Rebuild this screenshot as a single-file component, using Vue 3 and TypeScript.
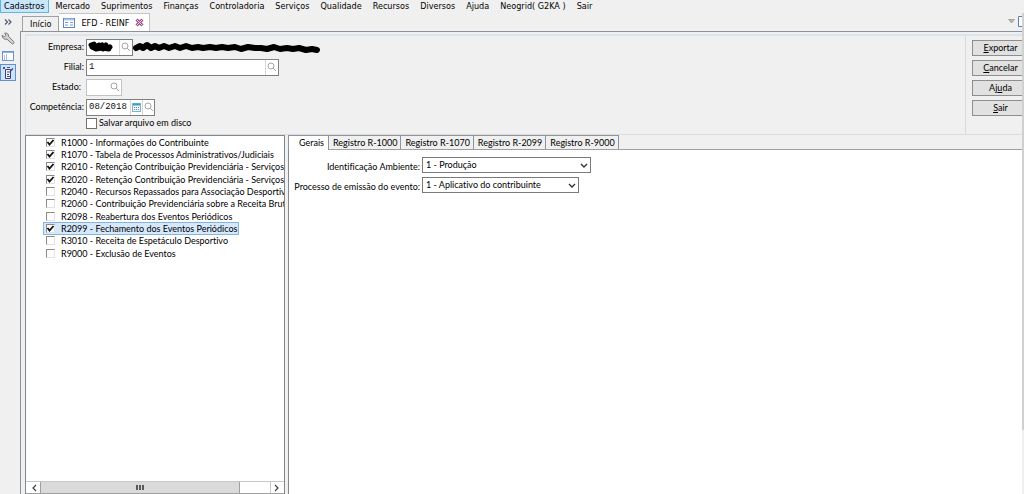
<script setup lang="ts">
import { ref } from 'vue'

const menus = ['Cadastros', 'Mercado', 'Suprimentos', 'Finanças', 'Controladoria', 'Serviços', 'Qualidade', 'Recursos', 'Diversos', 'Ajuda', 'Neogrid( G2KA )', 'Sair']

interface EventItem { label: string; checked: boolean; selected?: boolean }
const events = ref<EventItem[]>([
  { label: 'R1000 - Informações do Contribuinte', checked: true },
  { label: 'R1070 - Tabela de Processos Administrativos/Judiciais', checked: true },
  { label: 'R2010 - Retenção Contribuição Previdenciária - Serviços Tomados', checked: true },
  { label: 'R2020 - Retenção Contribuição Previdenciária - Serviços Prestados', checked: true },
  { label: 'R2040 - Recursos Repassados para Associação Desportiva', checked: false },
  { label: 'R2060 - Contribuição Previdenciária sobre a Receita Bruta', checked: false },
  { label: 'R2098 - Reabertura dos Eventos Periódicos', checked: false },
  { label: 'R2099 - Fechamento dos Eventos Periódicos', checked: true, selected: true },
  { label: 'R3010 - Receita de Espetáculo Desportivo', checked: false },
  { label: 'R9000 - Exclusão de Eventos', checked: false },
])

const tabs = ['Gerais', 'Registro R-1000', 'Registro R-1070', 'Registro R-2099', 'Registro R-9000']
const activeTab = ref('Gerais')

const actions = [
  { pre: '', key: 'E', post: 'xportar' },
  { pre: '', key: 'C', post: 'ancelar' },
  { pre: 'Aj', key: 'u', post: 'da' },
  { pre: '', key: 'S', post: 'air' },
]

const filial = ref('1')
const estado = ref('')
const competencia = ref('08/2018')
const salvar = ref(false)
const ambiente = ref('1 - Produção')
const processo = ref('1 - Aplicativo do contribuinte')
</script>

<template>
  <div class="app">
    <nav class="menubar">
      <button v-for="(m, i) in menus" :key="m" type="button" class="menu" :class="{ current: i === 0 }">{{ m }}</button>
    </nav>

    <div class="body">
      <aside class="rail">
        <button type="button" class="rail-btn" aria-label="Expandir">
          <svg width="8" height="6" viewBox="0 0 8 6"><path d="M1 .5l2.500 2.500L1 5.500M4.500 .5L7 3 4.500 5.500" fill="none" stroke="#45526e" stroke-width="1.100" /></svg>
        </button>
        <button type="button" class="rail-btn" aria-label="Ferramentas">
          <svg width="14" height="14" viewBox="0 0 14 14"><path d="M1.200 3.200l2.300 1.600 1.500-1.500L3.600 1.200c2.300-.6 4.300.9 4 3.300l5 5c1.200 1.300-.7 3.200-2 2L6 7.200C3.500 7.800 1 6 1.200 3.200z" fill="#d4d4d4" stroke="#777" stroke-width="1" /></svg>
        </button>
        <button type="button" class="rail-btn" aria-label="Formulários">
          <svg width="12" height="10" viewBox="0 0 12 10"><rect x=".5" y=".5" width="11" height="9" fill="#fff" stroke="#6f93cf" /><path d="M1 1.500h10" stroke="#8db1e6" /><path d="M2.500 4v5M4.500 3v6" stroke="#a3bfe8" /></svg>
        </button>
        <button type="button" class="rail-btn on" aria-label="EFD">
          <svg width="12" height="13" viewBox="0 0 12 13"><path d="M1 1h2v2H1zM5 1h3v1H5z" fill="#5a4a8a" /><path d="M3.500 3.500h5v9h-5z" fill="#f5f7ff" stroke="#40407c" /><path d="M5 6h3M5 8.500h2M5 10.500h3M8.500 5L11 2.500" fill="none" stroke="#40407c" stroke-width="1.200" /></svg>
        </button>
      </aside>

      <section class="workspace">
        <div class="doc-tabs">
          <button type="button" class="doc-tab">Início</button>
          <button type="button" class="doc-tab active">
            <svg width="12" height="10" viewBox="0 0 12 10"><rect x=".5" y=".5" width="11" height="9" fill="#fff" stroke="#5f86c6" /><path d="M1 1.500h10" stroke="#a9c6ef" stroke-width="2" /><path d="M2 4.500h3M2 7h3M7 4.500h3M7 7h3" stroke="#6f9ad8" /></svg>
            <span>EFD - REINF</span>
            <svg width="9" height="9" viewBox="0 0 9 9"><path d="M1.500 1.500l6 6M7.500 1.500l-6 6" stroke="#9a4f86" stroke-width="3" /><path d="M1.500 1.500l6 6M7.500 1.500l-6 6" stroke="#ecd3e6" stroke-width="1" /></svg>
          </button>
          <span class="win-tools">
            <svg width="7" height="5" viewBox="0 0 7 5"><path d="M.5.5h6l-3 3.500z" fill="#b5b5ac" stroke="#96968e" stroke-width=".7" /></svg>
            <svg width="4" height="11" viewBox="0 0 4 11"><path d="M4 .5H.5v10H4" fill="#fff" stroke="#5c7cb5" /></svg>
          </span>
        </div>

        <div class="page">
          <div class="top">
            <form class="filters" @submit.prevent>
              <label for="empresa">Empresa:</label>
              <div class="line">
                <div class="box empresa">
                  <input id="empresa" type="text" />
                  <svg class="scribble-a" width="26" height="12" viewBox="0 0 26 12"><path d="M4 4l3-1 1 3 4-2-2 3 5-3 1 4 3-4 2 4 2-2M5 6l4 2 6-1 7 1" fill="none" stroke="#000" stroke-width="5" stroke-linecap="round" stroke-linejoin="round" /></svg>
                  <button type="button" class="find" aria-label="Buscar empresa"><svg width="10" height="10" viewBox="0 0 10 10"><circle cx="4" cy="4" r="3" /><path d="M6.200 6.200L9 9" /></svg></button>
                </div>
                <svg class="scribble-b" width="190" height="13" viewBox="0 0 190 13"><path d="M3 7l4-2 3 2 4-3 4 3 4-2 4 2 5-2 5 2 6-2 5 2 6-2 6 2 6-1 5 1 7-1 6 1 6-1 6 1 7-1 6 2 7-2 7 1 6 0 6 1 7-2 6 2 7-1 6 1 6-1 7 2 6-1 5 1" fill="none" stroke="#000" stroke-width="6" stroke-linecap="round" stroke-linejoin="round" /></svg>
              </div>

              <label for="filial">Filial:</label>
              <div class="line">
                <div class="box filial">
                  <input id="filial" v-model="filial" type="text" />
                  <button type="button" class="find" aria-label="Buscar filial"><svg width="10" height="10" viewBox="0 0 10 10"><circle cx="4" cy="4" r="3" /><path d="M6.200 6.200L9 9" /></svg></button>
                </div>
              </div>

              <label for="estado" class="lbl-off">Estado:</label>
              <div class="line">
                <div class="box estado">
                  <input id="estado" v-model="estado" type="text" />
                  <button type="button" class="find" aria-label="Buscar estado"><svg width="10" height="10" viewBox="0 0 10 10"><circle cx="4" cy="4" r="3" /><path d="M6.200 6.200L9 9" /></svg></button>
                </div>
              </div>

              <label for="comp">Competência:</label>
              <div class="line">
                <div class="box comp">
                  <input id="comp" v-model="competencia" type="text" />
                  <button type="button" class="find" aria-label="Calendário"><svg width="9" height="9" viewBox="0 0 9 9"><rect x=".5" y=".5" width="8" height="8" fill="#eef7fb" stroke="#7fb4c9" /><path d="M1 1.500h7" stroke="#36a3b8" stroke-width="2" /><path d="M2 4.500h5M2 6.500h5" stroke="#6f86c0" stroke-dasharray="1 1" /></svg></button>
                  <button type="button" class="find" aria-label="Buscar competência"><svg width="10" height="10" viewBox="0 0 10 10"><circle cx="4" cy="4" r="3" /><path d="M6.200 6.200L9 9" /></svg></button>
                </div>
              </div>

              <label class="save"><input v-model="salvar" type="checkbox" />Salvar arquivo em disco</label>
            </form>

            <div class="actions">
              <button v-for="a in actions" :key="a.key" type="button">{{ a.pre }}<u>{{ a.key }}</u>{{ a.post }}</button>
            </div>
          </div>

          <div class="panes">
            <div class="tree">
              <ul>
                <li v-for="e in events" :key="e.label">
                  <label :class="{ selected: e.selected }">
                    <span class="tick">
                      <input v-model="e.checked" type="checkbox" />
                      <svg v-if="e.checked" width="9" height="9" viewBox="0 0 9 9"><path d="M1.500 4l2 2.500L7.500 2" fill="none" stroke="#111" stroke-width="1.800" /></svg>
                    </span>{{ e.label }}</label>
                </li>
              </ul>
              <div class="hscroll">
                <button type="button" aria-label="Rolar para a esquerda"><svg width="6" height="8" viewBox="0 0 6 8"><path d="M5 1L2 4l3 3" /></svg></button>
                <div class="track"><div class="thumb"><i></i><i></i><i></i></div></div>
                <button type="button" aria-label="Rolar para a direita"><svg width="6" height="8" viewBox="0 0 6 8"><path d="M1 1l3 3-3 3" /></svg></button>
              </div>
            </div>

            <div class="detail">
              <div class="tabs" role="tablist">
                <button v-for="t in tabs" :key="t" type="button" role="tab" :aria-selected="t === activeTab" :class="{ active: t === activeTab }" @click="activeTab = t">{{ t }}</button>
              </div>
              <div class="fields">
                <label for="amb">Identificação Ambiente:</label>
                <div class="pick wide">
                  <select id="amb" v-model="ambiente"><option>1 - Produção</option></select>
                  <svg width="8" height="6" viewBox="0 0 8 6"><path d="M1 1l3 3 3-3" /></svg>
                </div>
                <label for="proc">Processo de emissão do evento:</label>
                <div class="pick">
                  <select id="proc" v-model="processo"><option>1 - Aplicativo do contribuinte</option></select>
                  <svg width="8" height="6" viewBox="0 0 8 6"><path d="M1 1l3 3 3-3" /></svg>
                </div>
              </div>
            </div>
          </div>
        </div>
      </section>
      <div class="edge"></div>
    </div>
  </div>
</template>

<style>
html, body { background: #f0f0f0; }
</style>

<style scoped>
* { box-sizing: border-box; }
.app { height: 100vh; display: flex; flex-direction: column; overflow: hidden; background: #f0f0f0; color: #000; font: 9px/12px Lato, "Open Sans", sans-serif; font-variant-ligatures: none; }
button { font: inherit; color: inherit; margin: 0; padding: 0; background: none; border: 0; white-space: nowrap; }
svg { display: block; flex: none; }

.menubar { display: flex; height: 13px; flex: none; font-family: "DejaVu Sans Condensed", "Open Sans", sans-serif; }
.menu { height: 13px; padding: 0 5px 0 4px; line-height: 10px; border: 1px solid transparent; border-top: 0; }
.menu.current { background: #c8e6fa; border-color: #62b4e4; padding: 0 4px 0 3px; margin-right: 1px; }

.body { flex: 1; min-height: 0; display: flex; }
.rail { width: 20px; flex: none; display: flex; flex-direction: column; }
.rail-btn { width: 16px; height: 17px; display: flex; align-items: center; justify-content: center; border: 1px solid transparent; }
.rail-btn.on { background: #cfe4fa; border-color: #5b93cf; }
.edge { width: 2px; flex: none; background: #d0d0d0; margin-bottom: 64px; }

.workspace { flex: 1; min-width: 0; display: flex; flex-direction: column; }
.doc-tabs { height: 18px; flex: none; display: flex; align-items: flex-end; padding-left: 2px; font-family: "DejaVu Sans Condensed", "Open Sans", sans-serif; }
.doc-tab { height: 15px; padding: 0 7px; border: 1px solid #a0a0a0; border-bottom: 0; display: flex; align-items: center; gap: 6px; }
.doc-tab.active { height: 18px; padding: 0 5px 0 4px; background: #fff; border-color: #c4c4c4; border-left: 0; }
.win-tools { margin-left: auto; display: flex; align-items: center; gap: 3px; height: 20px; }

.page { flex: 1; min-height: 0; display: flex; flex-direction: column; border: 1px solid #8b929c; border-bottom: 0; border-right: 0; padding: 2px 0 0 4px; }
.top { height: 101px; flex: none; display: flex; border-top: 2px solid #dde4ea; border-left: 1px solid #dde4ea; border-bottom: 1px solid #dcdcdc; }
.filters { flex: 1; display: grid; grid-template-columns: 58px 1fr; grid-template-rows: repeat(4, 20px) 12px; column-gap: 2px; align-content: start; align-items: center; padding-top: 1px; }
.filters > label { text-align: right; white-space: nowrap; }
.filters > .lbl-off { padding-right: 3px; }
.line { display: flex; align-items: center; }
.box { display: flex; height: 17px; background: #fff; border: 1px solid #7f7f7f; position: relative; }
.box input { flex: 1; min-width: 0; border: 0; padding: 0 2px; background: transparent; outline: 0; font: 9px/15px "Liberation Mono", monospace; color: #111; }
.empresa { width: 47px; }
.filial { width: 193px; }
.estado { width: 36px; border-color: #c2c2c2; }
.comp { width: 69px; }
.find { width: 13px; flex: none; display: flex; align-items: center; justify-content: center; border-left: 1px solid #d6d6d6; }
.comp .find { width: 12px; }
.estado .find { border-left: 0; }
.find > svg { fill: none; stroke: #a5a5a5; }
.scribble-a { position: absolute; left: 0; top: 1px; }
.filters > .save { grid-column: 2; display: flex; align-items: center; gap: 2px; text-align: left; }
input[type="checkbox"] { appearance: none; display: block; margin: 0; width: 11px; height: 11px; flex: none; background: #fff; border: 1px solid #707070; }

.actions { width: 57px; flex: none; display: flex; flex-direction: column; gap: 4px; padding: 4px 0 0 6px; border-left: 1px solid #d9d9d9; }
.actions button { height: 16px; line-height: 14px; padding-left: 6px; background: #e1e1e1; border: 1px solid #8e8e8e; border-right: 0; }

.panes { flex: 1; min-height: 0; display: flex; gap: 3px; }
.tree { width: 260px; flex: none; display: flex; flex-direction: column; background: #fff; border: 1px solid #828790; border-bottom: 0; }
.tree ul { list-style: none; margin: 0; padding: 0 1px 0 17px; flex: 1; min-height: 0; overflow: hidden; display: flex; flex-direction: column; }
.tree li { height: 12px; flex: none; display: flex; }
.tree li:nth-child(3n) { height: 13px; }
.tree label { display: flex; align-items: center; gap: 6px; height: 13px; padding: 0 1px 0 2px; border: 1px solid transparent; white-space: nowrap; line-height: 11px; }
.tree label.selected { background: #d6e9fc; border-color: #84b4e4; }
.tick { position: relative; width: 9px; height: 9px; flex: none; }
.tree input[type="checkbox"] { width: 9px; height: 9px; border-color: #8a8a8a #e2e2e2 #e2e2e2 #8a8a8a; }
.tick svg { position: absolute; left: 0; top: 0; pointer-events: none; }
.hscroll { height: 13px; flex: none; display: flex; border-top: 1px solid #c8c8c8; border-bottom: 1px solid #a0a0a0; padding: 0 1px; }
.hscroll button { width: 13px; flex: none; display: flex; align-items: center; justify-content: center; }
.hscroll button:last-child { border-left: 1px solid #c8c8c8; }
.hscroll svg { fill: none; stroke: #404040; stroke-width: 1.2; }
.track { flex: 1; display: flex; }
.thumb { width: 87%; background: #dadada; border: 1px solid #a0a0a0; border-width: 0 1px; display: flex; align-items: center; justify-content: center; gap: 1px; }
.thumb i { width: 2px; height: 5px; background: #5a5a5a; }

.detail { flex: 1; min-width: 0; display: flex; flex-direction: column; }
.tabs { height: 15px; flex: none; display: flex; align-items: flex-end; border-bottom: 1px solid #a0a0a0; }
.tabs button { height: 14px; line-height: 13px; padding: 0 3px 0 4px; border: 1px solid #8e949c; border-left: 0; border-bottom: 0; }
.tabs button.active { height: 15px; margin-bottom: -1px; padding: 0 4px 2px 10px; background: #fff; border-left: 1px solid #8e949c; }
.fields { flex: 1; display: grid; grid-template-columns: 131px 1fr; grid-auto-rows: 16px; gap: 4px 2px; align-content: start; padding-top: 7px; background: #fff; border-left: 1px solid #828790; }
.fields label { text-align: right; white-space: nowrap; line-height: 19px; }
.pick { width: 157px; height: 16px; position: relative; }
.pick.wide { width: 169px; }
.pick select { display: block; appearance: none; width: 100%; height: 16px; margin: 0; padding: 0 16px 0 3px; background: #fff; border: 1px solid #7a7a7a; border-radius: 0; font: inherit; line-height: 14px; color: inherit; }
.pick svg { position: absolute; right: 3px; top: 6px; fill: none; stroke: #333; stroke-width: 1.4; pointer-events: none; }
</style>
